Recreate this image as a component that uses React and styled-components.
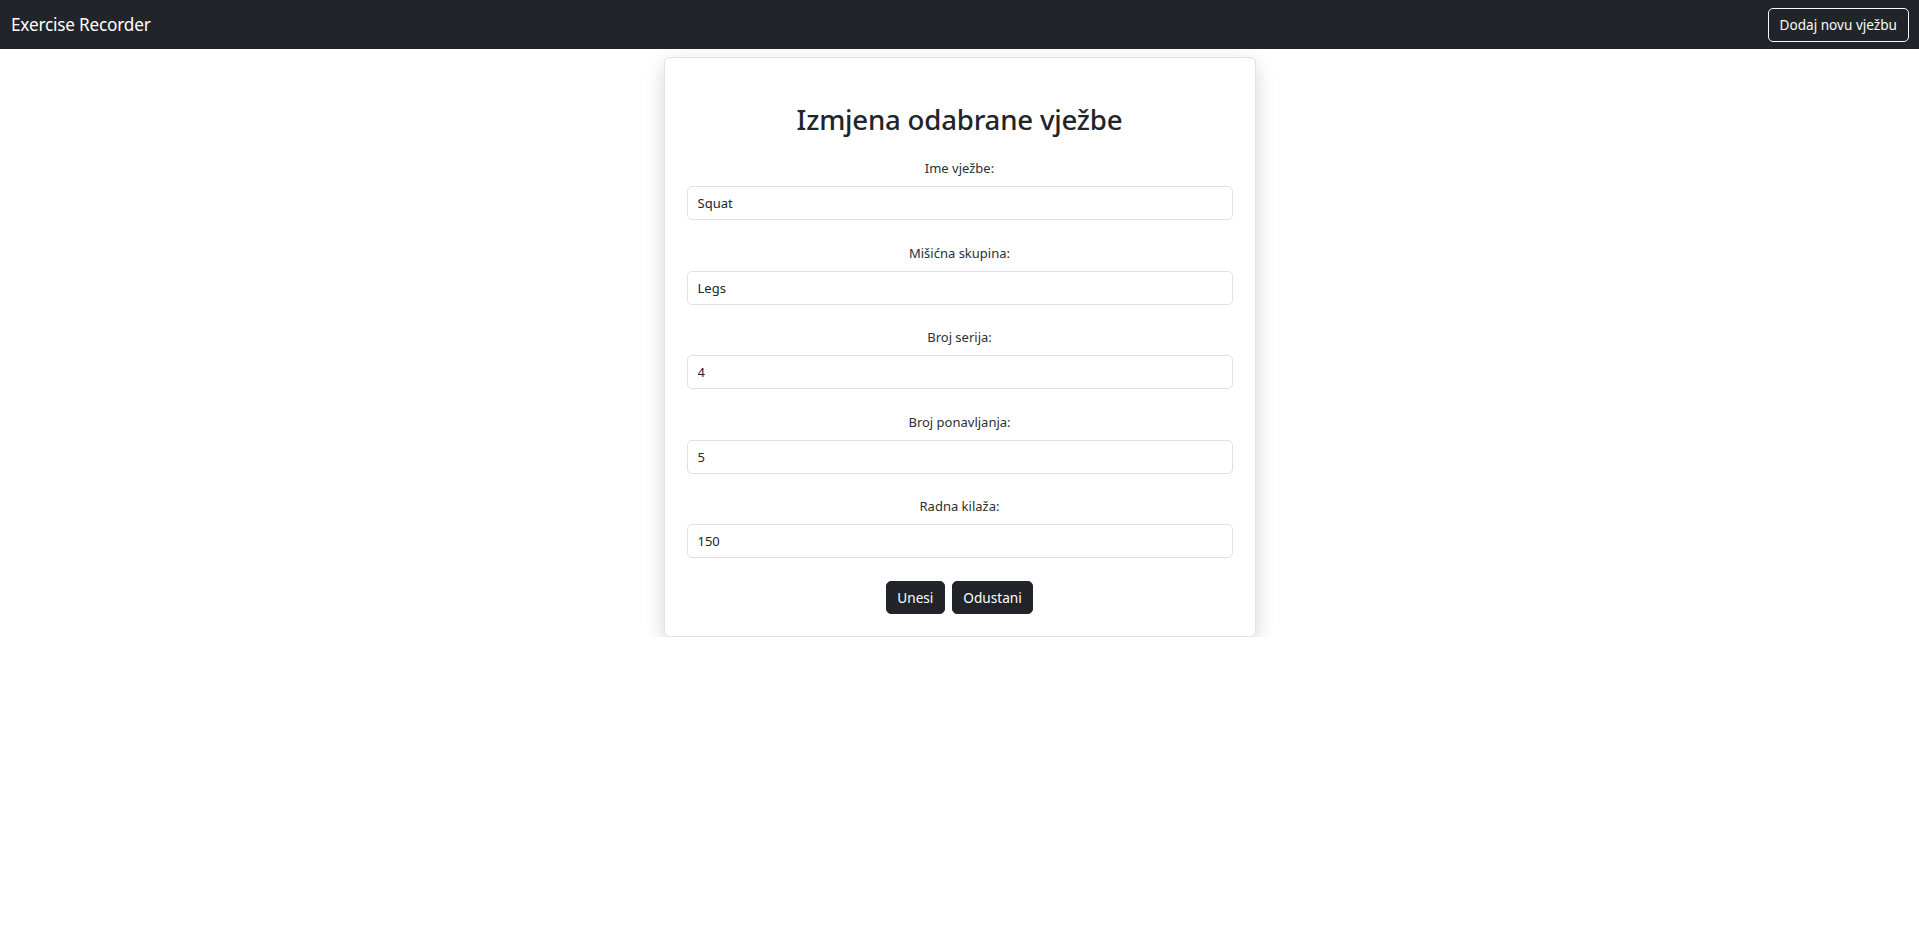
import React from "react";
import styled, { createGlobalStyle } from "styled-components";

const GlobalStyle = createGlobalStyle`
  html, body { margin: 0; padding: 0; background: #fff; }
  body {
    font-family: "Noto Sans", "Open Sans", sans-serif;
    color: #212529;
    -webkit-font-smoothing: antialiased;
  }
  * { box-sizing: border-box; }
`;

const NavBar = styled.nav`
  height: 49px;
  background: #212529;
  display: flex;
  align-items: center;
  justify-content: space-between;
  padding: 0 10px 0 11px;
`;

const Brand = styled.a`
  color: #fff;
  font-size: 17.2px;
  letter-spacing: -0.2px;
  text-decoration: none;
  padding-bottom: 1px;
`;

const OutlineButton = styled.button`
  height: 34px;
  padding: 0 11px;
  background: transparent;
  color: #f8f9fa;
  border: 1px solid #f8f9fa;
  border-radius: 5px;
  font-family: inherit;
  font-size: 13.6px;
  cursor: pointer;
`;

const Card = styled.div`
  width: 592px;
  margin: 8px auto 0;
  padding: 45px 22px 22px;
  background: #fff;
  border: 1px solid #dee2e6;
  border-radius: 6px;
  box-shadow: 0 7px 20px rgba(0, 0, 0, 0.17);
  text-align: center;
`;

const Title = styled.h2`
  margin: 0 0 22px;
  font-size: 27.6px;
  font-weight: 500;
  line-height: 1.2;
  letter-spacing: -0.2px;
`;

const Field = styled.div`
  margin-bottom: 22.5px;
`;

const Label = styled.label`
  display: block;
  font-size: 13px;
  line-height: 21px;
  margin-bottom: 7px;
  color: #2b3035;
`;

const Input = styled.input`
  display: block;
  width: 100%;
  height: 34px;
  padding: 0 10px;
  font-family: inherit;
  font-size: 13px;
  color: #212529;
  background: #fff;
  border: 1px solid #dee2e6;
  border-radius: 5px;
  outline: none;
`;

const Actions = styled.div`
  display: flex;
  justify-content: center;
  gap: 7px;
`;

const DarkButton = styled.button`
  height: 33px;
  padding: 0 10.5px;
  background: #212529;
  color: #fff;
  border: 1px solid #212529;
  border-radius: 5px;
  font-family: inherit;
  font-size: 13.6px;
  cursor: pointer;
`;

const fields = [
  ["Ime vježbe:", "Squat"],
  ["Mišićna skupina:", "Legs"],
  ["Broj serija:", "4"],
  ["Broj ponavljanja:", "5"],
  ["Radna kilaža:", "150"],
];

export default function App() {
  return (
    <>
      <GlobalStyle />
      <NavBar>
        <Brand href="#">Exercise Recorder</Brand>
        <OutlineButton>Dodaj novu vježbu</OutlineButton>
      </NavBar>
      <Card>
        <Title>Izmjena odabrane vježbe</Title>
        {fields.map(([label, value]) => (
          <Field key={label}>
            <Label>{label}</Label>
            <Input defaultValue={value} />
          </Field>
        ))}
        <Actions>
          <DarkButton>Unesi</DarkButton>
          <DarkButton>Odustani</DarkButton>
        </Actions>
      </Card>
    </>
  );
}
